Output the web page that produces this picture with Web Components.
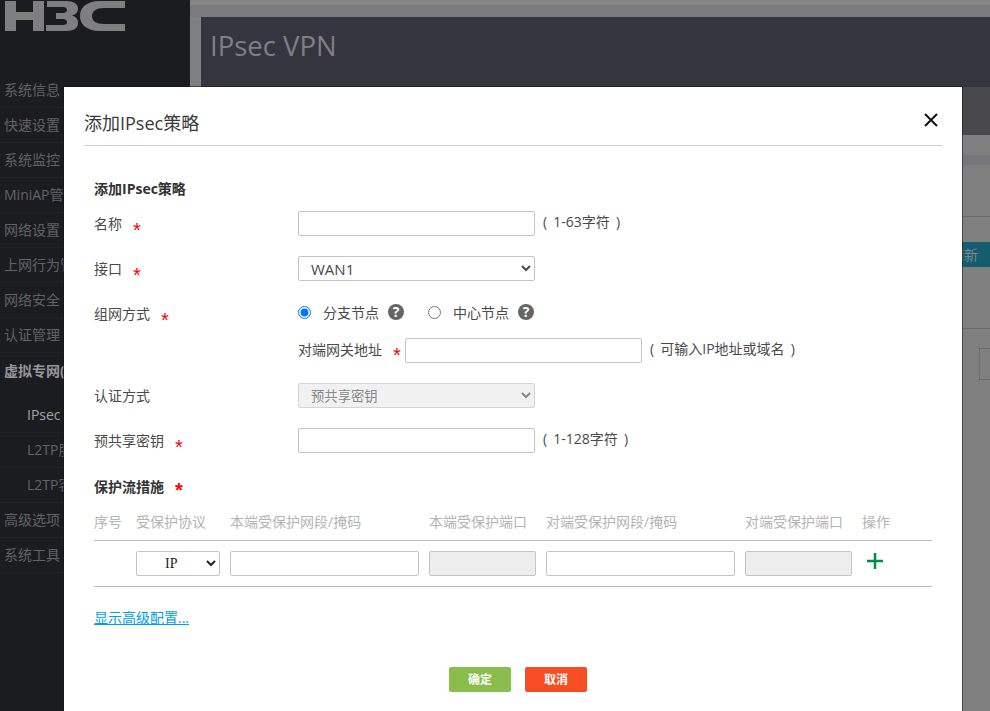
<!DOCTYPE html>
<html lang="zh">
<head>
<meta charset="utf-8">
<title>IPsec VPN</title>
<style>
  html, body { margin: 0; height: 100%; overflow: hidden; }
  body { font-family: "Open Sans", "Noto Sans CJK SC", sans-serif; font-size: 14px; }
</style>
</head>
<body>
<app-shell>
  <side-nav slot="nav">
    <nav-item>系统信息</nav-item>
    <nav-item>快速设置</nav-item>
    <nav-item>系统监控</nav-item>
    <nav-item>MiniAP管理</nav-item>
    <nav-item>网络设置</nav-item>
    <nav-item>上网行为管理</nav-item>
    <nav-item>网络安全</nav-item>
    <nav-item>认证管理</nav-item>
    <nav-item open>虚拟专网(VPN)</nav-item>
    <nav-item sub active>IPsec VPN</nav-item>
    <nav-item sub>L2TP服务器</nav-item>
    <nav-item sub>L2TP客户端</nav-item>
    <nav-item>高级选项</nav-item>
    <nav-item>系统工具</nav-item>
  </side-nav>
  <page-area slot="main" heading="IPsec VPN"></page-area>
  <modal-dialog slot="modal" heading="添加IPsec策略">
    <h-section>添加IPsec策略</h-section>
    <form-row label="名称" required>
      <text-field></text-field><field-hint>( 1-63字符 )</field-hint>
    </form-row>
    <form-row label="接口" required>
      <select-field value="WAN1"></select-field>
    </form-row>
    <form-row label="组网方式" required compact>
      <radio-choice name="mode" checked>分支节点</radio-choice>
      <radio-choice name="mode">中心节点</radio-choice>
    </form-row>
    <form-row sublabel="对端网关地址">
      <text-field></text-field><field-hint>( 可输入IP地址或域名 )</field-hint>
    </form-row>
    <form-row label="认证方式">
      <select-field value="预共享密钥" disabled></select-field>
    </form-row>
    <form-row label="预共享密钥" required>
      <text-field></text-field><field-hint>( 1-128字符 )</field-hint>
    </form-row>
    <h-section required spaced>保护流措施</h-section>
    <flow-table></flow-table>
    <a-link>显示高级配置...</a-link>
    <dialog-actions></dialog-actions>
  </modal-dialog>
</app-shell>

<script>
  // small helper so each class only has to give its css and markup
  function shadow(el, html) {
    el.attachShadow({ mode: 'open' }).innerHTML = html;
  }

  const FIELD_CSS = `
    input, select {
      box-sizing: border-box; height: 25px; margin: 0;
      border: 1px solid #c4c4c4; border-radius: 2px; background: #fff;
      font: 14px "Open Sans", "Noto Sans CJK SC", sans-serif; color: #4a4a4a; outline: none;
    }`;

  // the red required mark sits low against the label text
  const STAR_CSS = `
    b { margin-left: 11px; color: #f00; font: 400 20px/0 "Liberation Sans", sans-serif; vertical-align: -8px; }`;

  class AppShell extends HTMLElement {
    constructor() {
      super();
      shadow(this, `
        <style>
          :host { display: flex; position: relative; width: 990px; height: 711px; overflow: hidden; background: #808080; }
          .overlay { position: absolute; inset: 0; }
        </style>
        <slot name="nav"></slot>
        <slot name="main"></slot>
        <div class="overlay"><slot name="modal"></slot></div>`);
    }
  }

  class SideNav extends HTMLElement {
    constructor() {
      super();
      shadow(this, `
        <style>
          :host { display: block; flex: none; width: 190px; height: 711px; background: #1b1c20; }
          .logo { display: block; height: 73px; }
          .list { display: flex; flex-direction: column; }
        </style>
        <svg class="logo" width="190" height="73" viewBox="0 0 190 73" fill="#7f7f7f">
          <path d="M5 1H16V12H33V1H44V31H33V20H16V31H5Z"/>
          <path d="M47 1H66C74 1 78 4 78 8.5C78 12 76 14.5 72 15.5C76 16.5 78 19 78 23C78 28 74 31 66 31H46V25H62C66 25 67 24 67 22.5C67 20.5 66 19 62 19H56V13H62C66 13 67 11.5 67 10C67 8 66 7 62 7H47Z"/>
          <path d="M125 1H100C86 1 80 8 80 16C80 24 86 31 100 31H125V24H104C96 24 92 21 92 16C92 11 96 8 104 8H125Z"/>
        </svg>
        <div class="list"><slot></slot></div>`);
    }
  }

  class NavItem extends HTMLElement {
    constructor() {
      super();
      shadow(this, `
        <style>
          :host {
            display: block; box-sizing: border-box; height: 35px; padding-left: 4px;
            line-height: 34px; font-size: 14px; color: #616266; white-space: nowrap; overflow: hidden;
            border-bottom: 1px solid #202126;
          }
          :host([open]) { color: #97979a; font-weight: 700; height: 45px; line-height: 35px; border-bottom-color: #1b1c20; }
          :host([sub]) { padding-left: 27px; }
          :host([active]) { color: #a3a3a6; }
        </style>
        <slot></slot>`);
    }
  }

  class PageArea extends HTMLElement {
    constructor() {
      super();
      shadow(this, `
        <style>
          :host { display: block; flex: 1; min-width: 0; background: #808080; }
          .top { height: 5px; background: #858585; }
          .bar { height: 12px; background: #7b7a7f; }
          .wrap { padding-left: 11px; }
          .head { height: 70px; box-sizing: border-box; background: #34353e; padding: 10px 0 0 9px; color: #7e7f85; font-size: 27.5px; line-height: 38px; }
          .tabs { height: 48px; background: #49494d; }
          .strip { height: 10px; margin-top: 20px; background: #76767c; }
          .line { margin-top: 51px; border-top: 1px solid #6b6b6b; }
          .tools { display: flex; justify-content: flex-end; margin-top: 25px; }
          .refresh { width: 72px; height: 25px; box-sizing: border-box; padding-left: 32px; background: #145c6e; color: #78898f; font-size: 14px; line-height: 25px; overflow: hidden; white-space: nowrap; }
          .line2 { margin-top: 61px; border-top: 1px solid #6b6b6b; }
          .search { width: 10px; height: 30px; margin: 19px 0 0 auto; border: 1px solid #6b6b6b; border-right: 0; }
        </style>
        <div class="top"></div>
        <div class="bar"></div>
        <div class="wrap">
          <div class="head">${this.getAttribute('heading')}</div>
          <div class="tabs"></div>
          <div class="strip"></div>
          <div class="line"></div>
          <div class="tools"><div class="refresh">刷新</div></div>
          <div class="line2"></div>
          <div class="search"></div>
        </div>`);
    }
  }

  class ModalDialog extends HTMLElement {
    constructor() {
      super();
      shadow(this, `
        <style>
          :host {
            display: block; position: absolute; left: 64px; top: 87px; width: 898px; height: 640px;
            box-sizing: border-box; padding: 0 20px; background: #fff; color: #4a4a4a;
            box-shadow: 0 0 0 1px rgba(20,20,20,.55);
          }
          header { display: flex; align-items: center; justify-content: space-between; box-sizing: border-box; height: 59px; padding-top: 11px; border-bottom: 1px solid #ccc; }
          h1 { margin: 0; font-size: 18px; font-weight: 400; color: #3a3a3a; }
          svg { display: block; margin-right: 4px; margin-top: -4px; }
          .body { padding: 33px 10px 0; }
        </style>
        <header>
          <h1>${this.getAttribute('heading')}</h1>
          <svg width="14" height="14" viewBox="0 0 14 14" stroke="#111" stroke-width="2" fill="none"><path d="M1 1L13 13M13 1L1 13"/></svg>
        </header>
        <div class="body"><slot></slot></div>`);
    }
  }

  class HSection extends HTMLElement {
    constructor() {
      super();
      shadow(this, `
        <style>${STAR_CSS}
          :host { display: block; height: 20px; margin-bottom: 12px; font-size: 14px; font-weight: 700; line-height: 20px; color: #333; }
          :host([spaced]) { margin-top: 24px; margin-bottom: 16px; }
          b { font-weight: 700; vertical-align: -5px; }
        </style>
        <slot></slot>${this.hasAttribute('required') ? '<b>*</b>' : ''}`);
    }
  }

  class FormRow extends HTMLElement {
    constructor() {
      super();
      const star = this.hasAttribute('required') ? '<b>*</b>' : '';
      const label = this.getAttribute('label') || '';
      const sub = this.getAttribute('sublabel');
      shadow(this, `
        <style>${STAR_CSS}
          :host { display: grid; grid-template-columns: 204px 1fr; align-items: center; height: 25px; margin-bottom: 20px; font-size: 14px; color: #4a4a4a; }
          :host([compact]) { margin-bottom: 12px; }
          .label { line-height: 25px; white-space: nowrap; }
          .ctl { display: flex; align-items: center; }
          .sub { width: 107px; flex: none; margin-bottom: 4px; white-space: nowrap; }
          .sub b { vertical-align: -7px; }
        </style>
        <div class="label">${label}${star}</div>
        <div class="ctl">${sub ? `<span class="sub">${sub}<b>*</b></span>` : ''}<slot></slot></div>`);
    }
  }

  class TextField extends HTMLElement {
    constructor() {
      super();
      shadow(this, `
        <style>${FIELD_CSS}
          :host { display: block; flex: none; }
          input { display: block; width: 237px; }
        </style>
        <input type="text">`);
    }
  }

  class SelectField extends HTMLElement {
    constructor() {
      super();
      const value = this.getAttribute('value');
      shadow(this, `
        <style>${FIELD_CSS}
          :host { display: block; flex: none; }
          select { display: block; width: 237px; padding-left: 8px; font-size: 15px; }
          select:disabled { background: #f1f1f1; border-color: #d4d4d4; color: #888; opacity: 1; font-size: 13.33px; }
        </style>
        <select ${this.hasAttribute('disabled') ? 'disabled' : ''}><option>${value}</option></select>`);
    }
  }

  class FieldHint extends HTMLElement {
    constructor() {
      super();
      shadow(this, `
        <style>:host { display: block; margin: 0 0 5px 8px; font-size: 14px; word-spacing: 2.5px; color: #4a4a4a; white-space: nowrap; }</style>
        <slot></slot>`);
    }
  }

  class HelpIcon extends HTMLElement {
    constructor() {
      super();
      shadow(this, `
        <style>
          :host { display: block; width: 16px; height: 16px; border-radius: 50%; background: #666; color: #fff;
            font: 700 14px/16px "Open Sans", sans-serif; text-align: center; }
        </style>?`);
    }
  }

  class RadioChoice extends HTMLElement {
    constructor() {
      super();
      const checked = this.hasAttribute('checked') ? 'checked' : '';
      shadow(this, `
        <style>
          :host { display: flex; align-items: center; width: 130px; margin-bottom: 3px; font-size: 14px; color: #4a4a4a; }
          input { width: 13px; height: 13px; margin: 0 12px 0 0; }
          help-icon { margin-left: 9px; }
        </style>
        <input type="radio" name="${this.getAttribute('name')}" ${checked}><slot></slot><help-icon></help-icon>`);
    }
  }

  class FlowTable extends HTMLElement {
    constructor() {
      super();
      shadow(this, `
        <style>${FIELD_CSS}
          :host { display: block; }
          .row { display: grid; grid-template-columns: 32px 84px 189px 107px 189px 107px 1fr; column-gap: 10px; align-items: center; }
          .head { height: 27px; align-items: start; border-bottom: 1px solid #bdbdbd; font-size: 14px; line-height: 18px; color: #b4b4b4; white-space: nowrap; }
          .body { box-sizing: border-box; height: 46px; border-bottom: 1px solid #bdbdbd; }
          input, select { width: 100%; }
          select { padding-left: 24px; color: #222; font: 14px "Liberation Serif", "Noto Sans CJK SC", serif; }
          input[disabled] { background: #ededed; }
          svg { display: block; margin: 0 0 5px 5px; }
        </style>
        <div class="row head">
          <span>序号</span><span>受保护协议</span><span>本端受保护网段/掩码</span><span>本端受保护端口</span>
          <span>对端受保护网段/掩码</span><span>对端受保护端口</span><span>操作</span>
        </div>
        <div class="row body">
          <span></span>
          <select><option>IP</option></select>
          <input type="text">
          <input type="text" disabled>
          <input type="text">
          <input type="text" disabled>
          <svg width="16" height="16" viewBox="0 0 16 16" fill="#008a4e"><path d="M6.75 0h2.5v6.75H16v2.5H9.25V16h-2.5V9.25H0v-2.5h6.75z"/></svg>
        </div>`);
    }
  }

  class ALink extends HTMLElement {
    constructor() {
      super();
      shadow(this, `
        <style>
          :host { display: block; margin-top: 21px; font-size: 14px; line-height: 20px; color: #00a0e9; text-decoration: underline; }
        </style>
        <slot></slot>`);
    }
  }

  class DialogActions extends HTMLElement {
    constructor() {
      super();
      shadow(this, `
        <style>
          :host { display: flex; gap: 14px; margin-top: 39px; padding-left: 355px; }
          div { width: 62px; height: 25px; border-radius: 2px; color: #fff; font-size: 12px; font-weight: 700; line-height: 25px; text-align: center; }
          .ok { background: #8bbd4c; }
          .no { background: #f74d23; }
        </style>
        <div class="ok">确定</div><div class="no">取消</div>`);
    }
  }

  customElements.define('app-shell', AppShell);
  customElements.define('side-nav', SideNav);
  customElements.define('nav-item', NavItem);
  customElements.define('page-area', PageArea);
  customElements.define('modal-dialog', ModalDialog);
  customElements.define('h-section', HSection);
  customElements.define('form-row', FormRow);
  customElements.define('text-field', TextField);
  customElements.define('select-field', SelectField);
  customElements.define('field-hint', FieldHint);
  customElements.define('help-icon', HelpIcon);
  customElements.define('radio-choice', RadioChoice);
  customElements.define('flow-table', FlowTable);
  customElements.define('a-link', ALink);
  customElements.define('dialog-actions', DialogActions);
</script>
</body>
</html>
